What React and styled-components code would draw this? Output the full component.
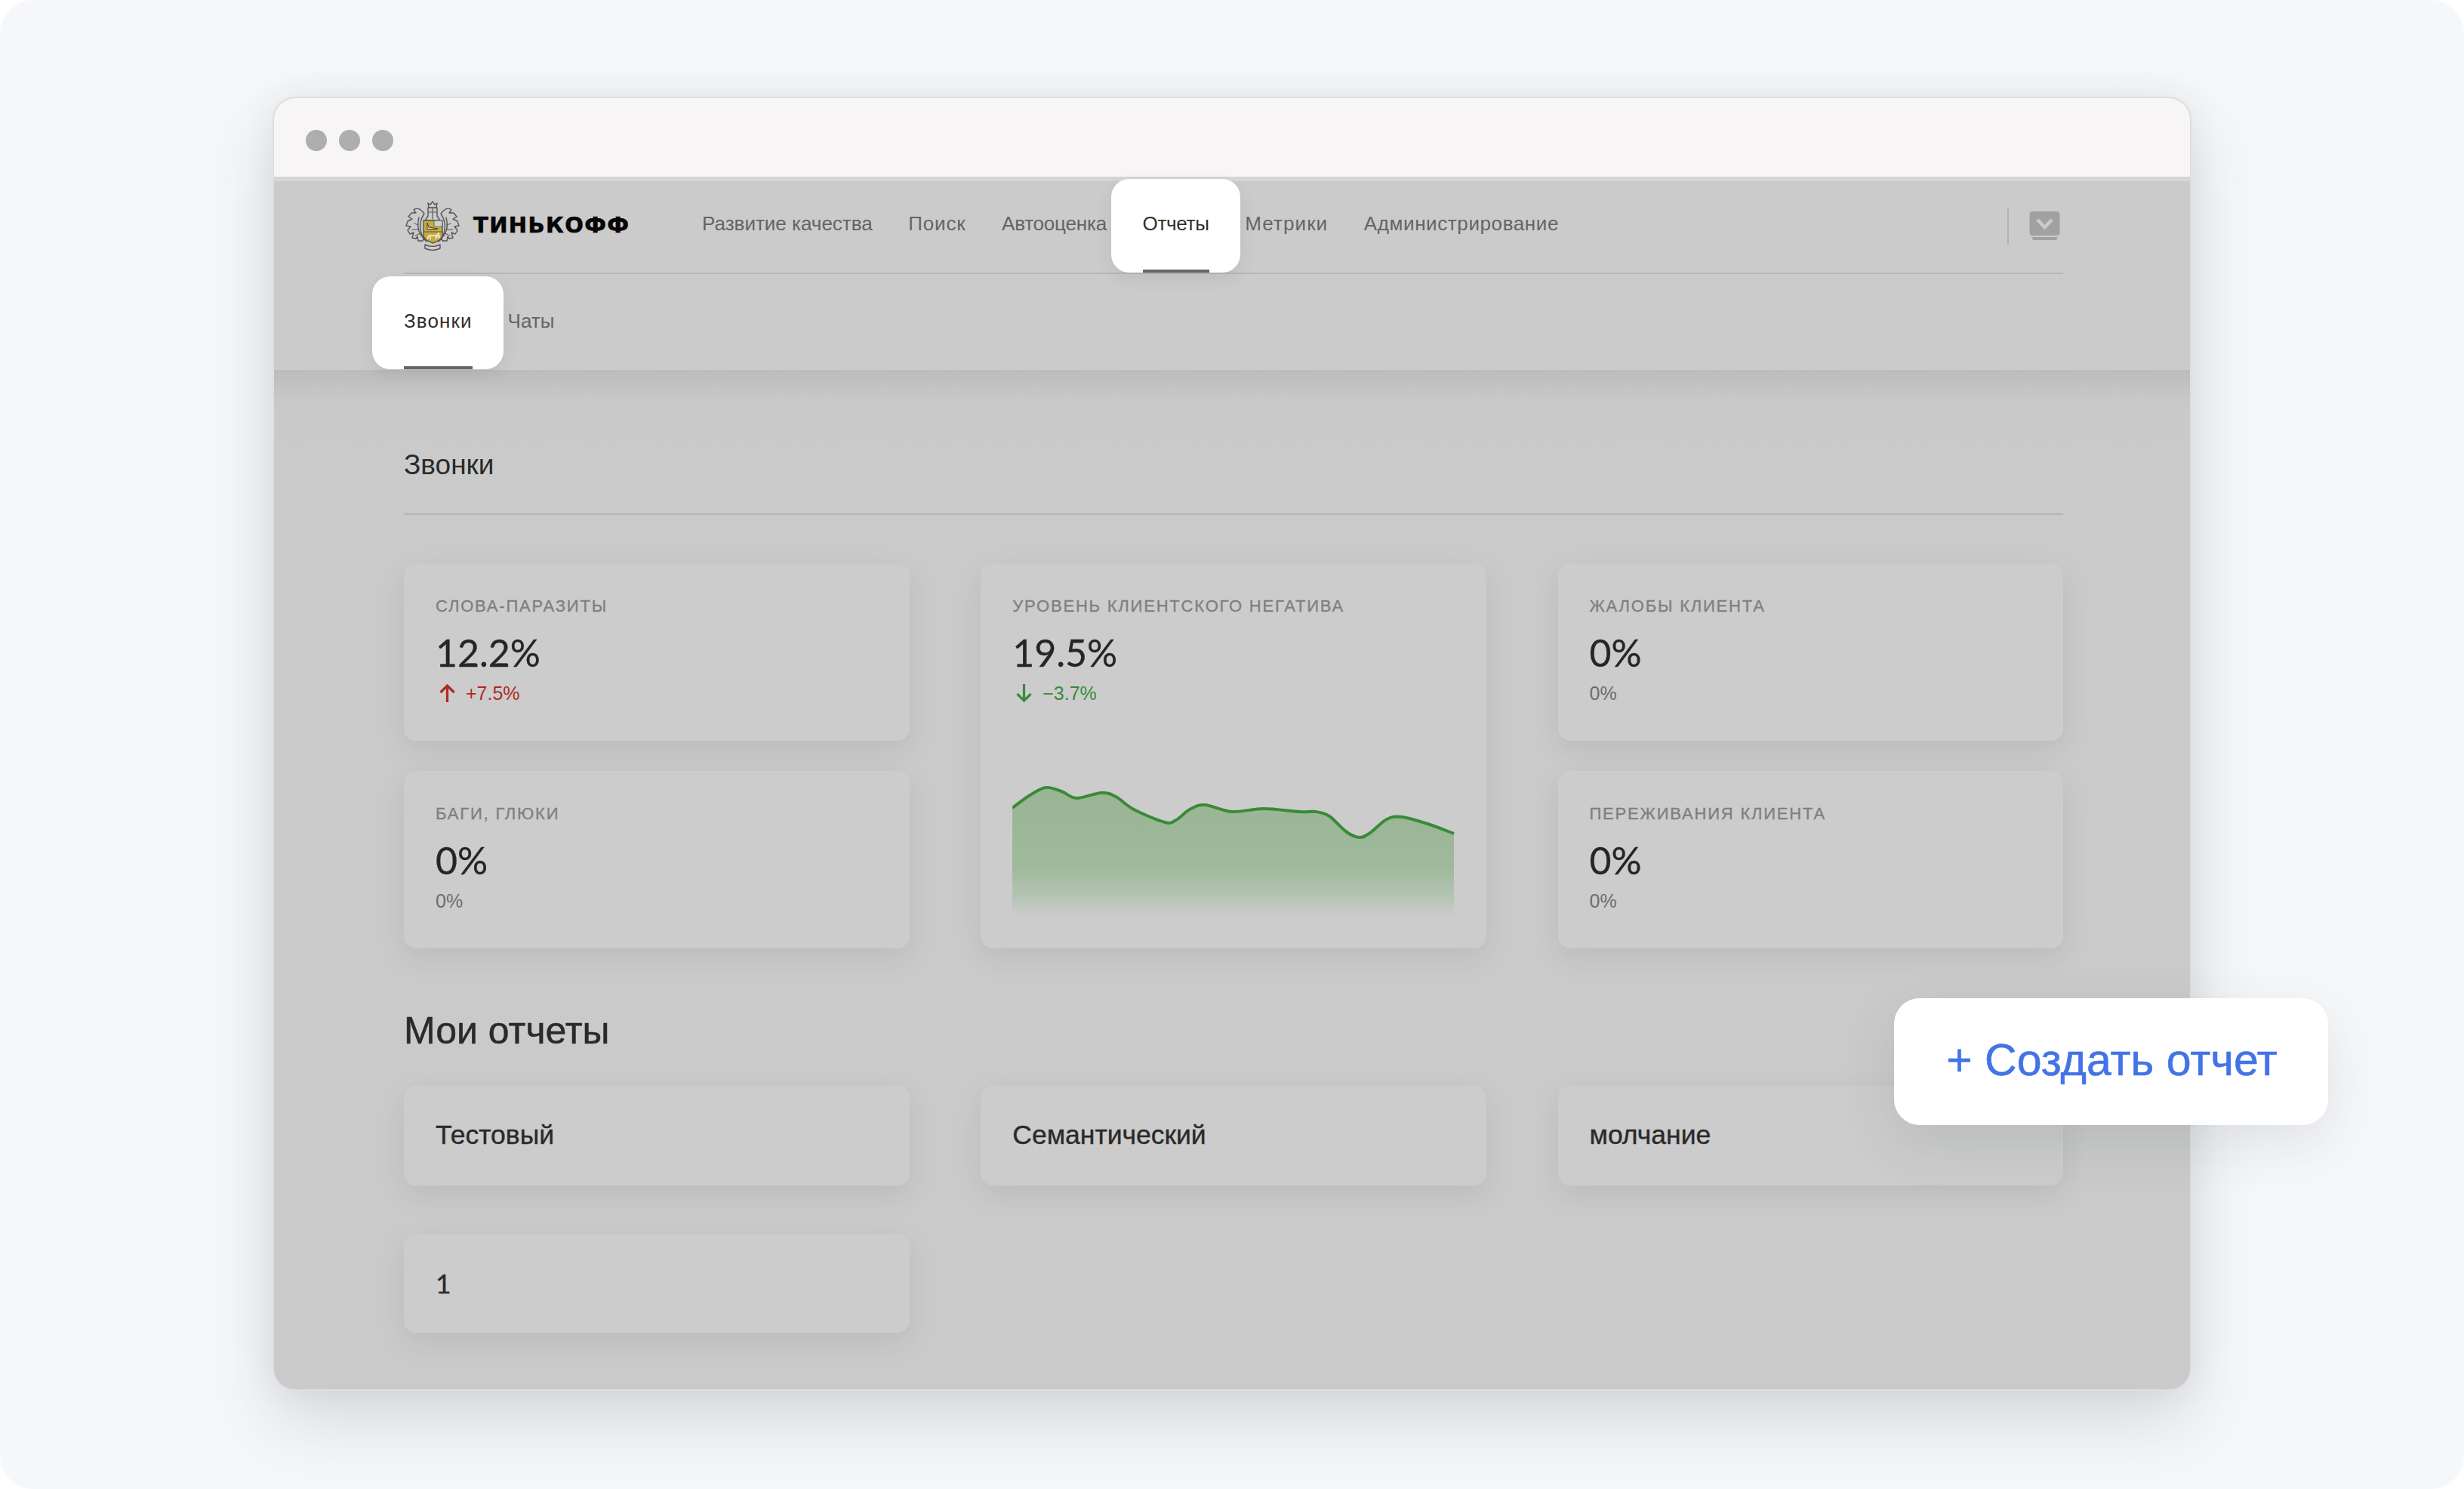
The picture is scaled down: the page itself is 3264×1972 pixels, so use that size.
import React from "react";
import styled, { createGlobalStyle } from "styled-components";

const Global = createGlobalStyle`
  html, body { margin: 0; padding: 0; background: #fff; }
  * { box-sizing: border-box; }
  body { font-family: "Liberation Sans", Arial, sans-serif; }
`;

const Page = styled.div`
  position: relative;
  width: 3264px;
  height: 1972px;
  background: #f6f7f9;
  border-radius: 44px;
  padding: 128px 361px 0;
  overflow: hidden;
`;

const Window = styled.div`
  width: 2542px;
  height: 1714px;
  border-radius: 30px;
  border: 2px solid #dfdfdf;
  background: #cacaca;
  box-shadow: 0 40px 90px rgba(60, 70, 85, 0.17), 0 0 40px rgba(60, 70, 85, 0.07);
  display: flex;
  flex-direction: column;
  overflow: hidden;
`;

const TitleBar = styled.div`
  flex: 0 0 110px;
  background: #f7f5f6;
  border-bottom: 6px solid #d6d6d6;
  display: flex;
  align-items: center;
  gap: 16px;
  padding: 8px 0 0 42px;
`;

const Dot = styled.span`
  width: 28px;
  height: 28px;
  border-radius: 50%;
  background: #aeaeae;
`;

const Header = styled.header`
  flex: 0 0 250px;
  background: #cbcbcb;
  padding: 0 168px 0 172px;
  display: flex;
  flex-direction: column;
`;

const TopRow = styled.div`
  height: 123px;
  display: flex;
  align-items: center;
  border-bottom: 2px solid #b8b8b8;
`;

const Logo = styled.div`
  width: 393px;
  display: flex;
  align-items: center;
  gap: 18px;
  margin-left: 2px;
  margin-top: -4px;
`;

const Word = styled.span`
  font-family: "DejaVu Sans", sans-serif;
  font-weight: 700;
  font-size: 29px;
  line-height: 1;
  letter-spacing: 1.4px;
  color: #060606;
  -webkit-text-stroke: 0.6px #060606;
`;

const Nav = styled.nav`
  display: flex;
  gap: 47.6px;
  height: 100%;
  align-items: center;
  margin-top: -10px;
`;

const TabLink = styled.a`
  position: relative;
  font-size: 26px;
  line-height: 1;
  white-space: nowrap;
  letter-spacing: ${(p) => p.$track || 0}px;
  color: ${(p) => (p.$active ? "#2f2f2f" : "#646464")};
  z-index: 0;
  ${(p) =>
    p.$active &&
    `
    &::before {
      content: "";
      position: absolute;
      z-index: -1;
      left: -42px;
      right: -41px;
      top: ${p.$top}px;
      bottom: ${p.$bottom}px;
      background: #fff;
      border-radius: 24px;
      box-shadow: 0 8px 24px rgba(0,0,0,.07);
    }
    &::after {
      content: "";
      position: absolute;
      left: 0;
      right: 0;
      bottom: ${p.$bottom}px;
      height: 4px;
      background: #666;
    }
  `}
`;

const RightTools = styled.div`
  margin-left: auto;
  display: flex;
  align-items: center;
  gap: 27px;
  padding-right: 4px;
  margin-top: -4px;
`;

const VRule = styled.span`
  width: 2px;
  height: 48px;
  background: #b2b2b2;
`;

const SubRow = styled.div`
  flex: 1;
  display: flex;
  align-items: center;
  gap: 47px;
  font-size: 26px;
  padding-bottom: 3px;
`;

const Main = styled.main`
  flex: 1;
  padding: 0 168px 0 172px;
  background: linear-gradient(#bcbcbc 0, #c9c9c9 42px, #cacaca 100px);
  display: flex;
  flex-direction: column;
`;

const SectionHead = styled.div`
  height: 192px;
  padding-top: 62px;
  display: flex;
  align-items: center;
  border-bottom: 2px solid #b4b4b4;
  font-size: 37px;
  color: #2a2a2a;
`;

const MetricGrid = styled.div`
  margin-top: 64px;
  display: grid;
  grid-template-columns: repeat(3, 669.5px);
  grid-template-rows: 235px 235px;
  justify-content: space-between;
  row-gap: 40px;
`;

const Card = styled.div`
  background: #cccccc;
  border-radius: 16px;
  box-shadow: 0 12px 36px rgba(0, 0, 0, 0.075);
  padding: 42px 42px 0;
  ${(p) => p.$tall && "grid-column: 2; grid-row: 1 / 3;"}
  ${(p) => p.$col && `grid-column: ${p.$col};`}
`;

const Label = styled.div`
  font-size: 22px;
  line-height: 30px;
  letter-spacing: 1.8px;
  color: #7f7f7f;
  white-space: nowrap;
  -webkit-text-stroke: 0.35px #7f7f7f;
`;

const Value = styled.div`
  font-family: Lato, "Liberation Sans", sans-serif;
  font-size: 50px;
  line-height: 60px;
  margin-top: 16px;
  color: #262626;
  -webkit-text-stroke: 0.3px #262626;
`;

const Delta = styled.div`
  margin-top: 8px;
  display: flex;
  align-items: center;
  gap: 14px;
  height: 32px;
  font-size: 25px;
  color: ${(p) => p.$color};
  svg { margin-left: 5px; }
`;

const Chart = styled.svg`
  display: block;
  margin: 106px 0 0 0;
`;

const ReportsTitle = styled.h2`
  margin: 81px 0 0;
  font-size: 50px;
  line-height: 56px;
  font-weight: 400;
  color: #2a2a2a;
  -webkit-text-stroke: 0.5px #2a2a2a;
`;

const ReportGrid = styled.div`
  margin-top: 45px;
  display: grid;
  grid-template-columns: repeat(3, 669.5px);
  grid-auto-rows: 131.5px;
  justify-content: space-between;
  row-gap: 64px;
`;

const Report = styled.div`
  background: #cccccc;
  border-radius: 16px;
  box-shadow: 0 12px 36px rgba(0, 0, 0, 0.075);
  padding: 0 42px;
  display: flex;
  align-items: center;
  font-size: 35.5px;
  color: #2a2a2a;
  -webkit-text-stroke: 0.4px #2a2a2a;
`;

const ReportNum = styled.span`
  font-family: Lato, "Liberation Sans", sans-serif;
`;

const CreateButton = styled.button`
  position: absolute;
  left: 2509px;
  top: 1322px;
  width: 575px;
  height: 168px;
  border: 0;
  border-radius: 34px;
  background: #fff;
  box-shadow: 0 24px 70px rgba(60, 70, 85, 0.12);
  color: #4373e6;
  font-family: "Liberation Sans", Arial, sans-serif;
  font-size: 59px;
  -webkit-text-stroke: 0.6px #4373e6;
  padding: 0 0 4px 2px;
`;

const Emblem = () => (
  <svg width="72" height="66" viewBox="0 0 72 66" fill="none">
    <g stroke="#555" strokeWidth="1.4" strokeLinejoin="round" strokeLinecap="round" fill="#cbcbcb">
      <path d="M25 17 C19 9 14 9 11 12 L14 16 L8 16 L4 21 L9 24 L3 27 L1 33 L7 34 L3 39 L6 44 L11 42 L9 49 L14 50 L16 47 L17 53 L23 53 L24 50 L28 54 C19 45 16 30 25 17 Z" />
      <path d="M47 17 C53 9 58 9 61 12 L58 16 L64 16 L68 21 L63 24 L69 27 L71 33 L65 34 L69 39 L66 44 L61 42 L63 49 L58 50 L56 47 L55 53 L49 53 L48 50 L44 54 C53 45 56 30 47 17 Z" />
      <path d="M18 22 C15 34 17 44 26 51 M54 22 C57 34 55 44 46 51" fill="none" />
      <path d="M12 30 L17 32 M9 38 L17 38 M60 30 L55 32 M63 38 L55 38 M13 46 L20 43 M59 46 L52 43" fill="none" strokeWidth="1" />
      <path d="M30 9 L42 9 L42 20 L46 26 L26 26 L30 20 Z" />
      <path d="M30 3 L33 5 L36 1 L39 5 L42 3 L41 9 L31 9 Z" />
      <path d="M36 9 L36 24 M31 15 L41 15" fill="none" strokeWidth="1.1" />
      <path d="M26 58 C32 61 40 61 46 58 L46 63 C40 66 32 66 26 63 Z" />
    </g>
    <path d="M24 26 L49 26 L49 46 C49 51 42 54 36.5 56 C31 54 24 51 24 46 Z" fill="#c8ab36" stroke="#555" strokeWidth="1.4" />
    <path d="M24 41 L49 41" stroke="#555" strokeWidth="1" />
    <path d="M38 26 L49 26 L49 33 C45 35 42 35 38 33 Z" fill="#cfcfcf" stroke="#555" strokeWidth="0.8" />
    <path d="M29 29 L31 35 L43 37 L29 38 Z" fill="#dcd9c8" stroke="#3c3c3c" strokeWidth="1" />
    <path d="M29 51 L31 46 L41 46 L44 43 L45 48 L41 47 L40 51 M33 47 L33 51" fill="none" stroke="#e4e2d6" strokeWidth="1.9" />
  </svg>
);

const AccountIcon = () => (
  <svg width="41" height="38" viewBox="0 0 41 38">
    <rect x="0.5" y="0" width="40" height="32" rx="4" fill="#a1a1a2" />
    <path d="M11 11 L20.5 21 L30 11" fill="none" stroke="#cbcbcb" strokeWidth="4.5" />
    <path d="M3.5 34 L37.5 34 L36 38 L5 38 Z" fill="#a1a1a2" />
  </svg>
);

const ArrowUp = () => (
  <svg width="21" height="24" viewBox="0 0 21 24" fill="none" stroke="#b02a22" strokeWidth="3.2">
    <path d="M10.5 24 L10.5 2 M1.5 11 L10.5 2 L19.5 11" />
  </svg>
);

const ArrowDown = () => (
  <svg width="21" height="24" viewBox="0 0 21 24" fill="none" stroke="#3a8a3a" strokeWidth="3.2">
    <path d="M10.5 0 L10.5 22 M1.5 13 L10.5 22 L19.5 13" />
  </svg>
);

const points = [
  [0, 28], [22, 12], [44, 1], [65, 6], [85, 15], [118, 8], [137, 13], [161, 30], [202, 47],
  [217, 44], [235, 30], [255, 24], [291, 33], [333, 29], [380, 33], [402, 33], [420, 39],
  [443, 60], [460, 67], [474, 61], [496, 43], [516, 40], [550, 49], [585, 62],
];

function smooth(pts) {
  let d = `M${pts[0][0]} ${pts[0][1]}`;
  for (let i = 0; i < pts.length - 1; i++) {
    const p0 = pts[i - 1] || pts[i];
    const p1 = pts[i];
    const p2 = pts[i + 1];
    const p3 = pts[i + 2] || p2;
    const c1 = [p1[0] + (p2[0] - p0[0]) / 6, p1[1] + (p2[1] - p0[1]) / 6];
    const c2 = [p2[0] - (p3[0] - p1[0]) / 6, p2[1] - (p3[1] - p1[1]) / 6];
    d += ` C${c1[0].toFixed(1)} ${c1[1].toFixed(1)} ${c2[0].toFixed(1)} ${c2[1].toFixed(1)} ${p2[0]} ${p2[1]}`;
  }
  return d;
}

const Sparkline = () => {
  const line = smooth(points);
  return (
    <Chart width="586" height="176" viewBox="0 -2 586 176">
      <defs>
        <linearGradient id="chartFill" x1="0" y1="0" x2="0" y2="1">
          <stop offset="0" stopColor="#99b595" />
          <stop offset="0.62" stopColor="#9fb99b" />
          <stop offset="0.82" stopColor="#b2c3b1" />
          <stop offset="1" stopColor="#cccccc" />
        </linearGradient>
      </defs>
      <path d={`${line} L585 172 L0 172 Z`} fill="url(#chartFill)" />
      <path d={line} fill="none" stroke="#3a8a35" strokeWidth="4" />
    </Chart>
  );
};

const navItems = [
  { label: "Развитие качества" },
  { label: "Поиск", track: 0.8 },
  { label: "Автооценка", track: -0.2 },
  { label: "Отчеты", track: -0.3, active: true },
  { label: "Метрики", track: 1.1 },
  { label: "Администрирование", track: 0.6 },
];

const metrics = [
  { col: 1, label: "СЛОВА-ПАРАЗИТЫ", value: "12.2%", delta: "+7.5%", color: "#b02a22", arrow: <ArrowUp /> },
  { col: 3, label: "ЖАЛОБЫ КЛИЕНТА", value: "0%", delta: "0%", color: "#6c6c6c" },
  { col: 1, label: "БАГИ, ГЛЮКИ", value: "0%", delta: "0%", color: "#6c6c6c" },
  { col: 3, label: "ПЕРЕЖИВАНИЯ КЛИЕНТА", value: "0%", delta: "0%", color: "#6c6c6c" },
];

const MetricBody = ({ label, value, delta, color, arrow }) => (
  <>
    <Label>{label}</Label>
    <Value>{value}</Value>
    <Delta $color={color}>
      {arrow}
      <span>{delta}</span>
    </Delta>
  </>
);

export default function App() {
  return (
    <>
      <Global />
      <Page>
        <Window>
          <TitleBar>
            <Dot />
            <Dot />
            <Dot />
          </TitleBar>
          <Header>
            <TopRow>
              <Logo>
                <Emblem />
                <Word>ТИНЬКОФФ</Word>
              </Logo>
              <Nav>
                {navItems.map((n) => (
                  <TabLink key={n.label} $active={n.active} $track={n.track} $top={-46} $bottom={-52}>
                    {n.label}
                  </TabLink>
                ))}
              </Nav>
              <RightTools>
                <VRule />
                <AccountIcon />
              </RightTools>
            </TopRow>
            <SubRow>
              <TabLink $active $track={1.1} $top={-46} $bottom={-51}>Звонки</TabLink>
              <TabLink>Чаты</TabLink>
            </SubRow>
          </Header>
          <Main>
            <SectionHead>Звонки</SectionHead>
            <MetricGrid>
              {metrics.map((m) => (
                <Card key={m.label} $col={m.col}>
                  <MetricBody {...m} />
                </Card>
              ))}
              <Card $tall>
                <MetricBody
                  label="УРОВЕНЬ КЛИЕНТСКОГО НЕГАТИВА"
                  value="19.5%"
                  delta="−3.7%"
                  color="#3a8a3a"
                  arrow={<ArrowDown />}
                />
                <Sparkline />
              </Card>
            </MetricGrid>
            <ReportsTitle>Мои отчеты</ReportsTitle>
            <ReportGrid>
              <Report>Тестовый</Report>
              <Report>Семантический</Report>
              <Report>молчание</Report>
              <Report><ReportNum>1</ReportNum></Report>
            </ReportGrid>
          </Main>
        </Window>
        <CreateButton>+ Создать отчет</CreateButton>
      </Page>
    </>
  );
}
